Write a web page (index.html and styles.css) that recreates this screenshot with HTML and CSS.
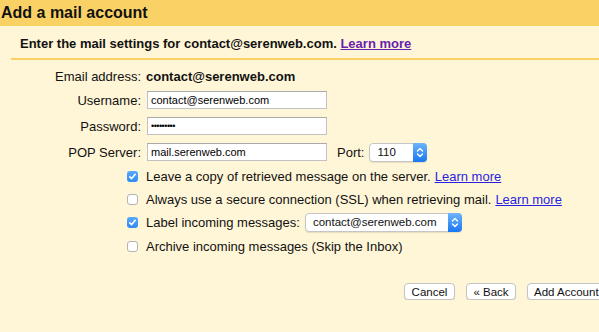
FILE: index.html
```html
<!DOCTYPE html>
<html lang="en">
  <head>
    <meta charset="UTF-8" />
    <meta name="viewport" content="width=device-width, initial-scale=1.0" />
    <title>Add a mail account</title>
    <link rel="stylesheet" href="styles.css">
  </head>
  <body>
    <h1 class="title">Add a mail account</h1>

    <div class="intro">
      Enter the mail settings for contact@serenweb.com.
      <a class="visited" href="#">Learn more</a>
    </div>

    <form class="fields">
      <!--
        Server settings
      -->
      <div class="row row-email">
        <span class="key">Email address:</span>
        <b>contact@serenweb.com</b>
      </div>
      <div class="row">
        <label class="key" for="user">Username:</label>
        <input class="text" id="user" type="text" value="contact@serenweb.com" />
      </div>
      <div class="row">
        <label class="key" for="pass">Password:</label>
        <input class="text pass" id="pass" type="password" value="secret123" />
      </div>
      <div class="row">
        <label class="key" for="pop">POP Server:</label>
        <input class="text" id="pop" type="text" value="mail.serenweb.com" />
        <span class="port-key">Port:</span>
        <div class="select port">
          <span class="value">110</span>
          <span class="arrow">
            <svg width="8" height="11" viewBox="0 0 8 11" fill="none" stroke="#fff" stroke-width="1.4" stroke-linecap="round" stroke-linejoin="round">
              <path d="M1.5 4 L4 1.5 L6.5 4" />
              <path d="M1.5 7 L4 9.5 L6.5 7" />
            </svg>
          </span>
        </div>
      </div>

      <!--
        Options
      -->
      <div class="opt opt-first">
        <span class="box checked">
          <svg width="9" height="9" viewBox="0 0 9 9" fill="none" stroke="#fff" stroke-width="1.6" stroke-linecap="round" stroke-linejoin="round"><path d="M1.8 4.8 L3.7 6.6 L7.2 2.3" /></svg>
        </span>
        Leave a copy of retrieved message on the server.
        <a href="#">Learn more</a>
      </div>
      <div class="opt">
        <span class="box"></span>
        Always use a secure connection (SSL) when retrieving mail.
        <a href="#">Learn more</a>
      </div>
      <div class="opt opt-select">
        <span class="box checked">
          <svg width="9" height="9" viewBox="0 0 9 9" fill="none" stroke="#fff" stroke-width="1.6" stroke-linecap="round" stroke-linejoin="round"><path d="M1.8 4.8 L3.7 6.6 L7.2 2.3" /></svg>
        </span>
        Label incoming messages:
        <div class="select label">
          <span class="value">contact@serenweb.com</span>
          <span class="arrow">
            <svg width="8" height="11" viewBox="0 0 8 11" fill="none" stroke="#fff" stroke-width="1.4" stroke-linecap="round" stroke-linejoin="round">
              <path d="M1.5 4 L4 1.5 L6.5 4" />
              <path d="M1.5 7 L4 9.5 L6.5 7" />
            </svg>
          </span>
        </div>
      </div>
      <div class="opt">
        <span class="box"></span>
        Archive incoming messages (Skip the Inbox)
      </div>

      <div class="btns">
        <button type="button">Cancel</button>
        <button type="button">&laquo; Back</button>
        <button type="submit">Add Account</button>
      </div>
    </form>
  </body>
</html>
```

FILE: styles.css
```css
/*
  Global styles
*/

:root {
  --yellow: #fad165;
  --cream: #fff6d7;
  --link: #2a1fe0;
  --visited: #6a1fb0;
  --border: #c2c2c2;
}
* {
  margin: 0;
  padding: 0;
  box-sizing: border-box;
}
body {
  overflow: hidden;
  color: #111;
  font-size: 13px;
  font-family: "Liberation Sans", Arial, sans-serif;
  background-color: var(--cream);
}
a {
  color: var(--link);
}
a.visited {
  color: var(--visited);
}

/*
  Header
*/

.title {
  height: 26px;
  padding-left: 1px;
  font-size: 16px;
  line-height: 26px;
  background-color: var(--yellow);
}
.intro {
  height: 34px;
  margin-left: 11px;
  padding: 10px 0 0 9px;
  font-weight: bold;
  border-bottom: 2px solid var(--yellow);
}

/*
  Fields
*/

.fields {
  padding-top: 7px;
}
.row {
  display: flex;
  align-items: center;
  height: 18px;
  margin-top: 8px;
  white-space: nowrap;
}
.row-email {
  margin-top: 0;
  margin-bottom: -2px;
}
.row-email b {
  margin-left: -1px;
}
.key {
  flex-shrink: 0;
  width: 141px;
  margin-right: 6px;
  text-align: right;
}
.text {
  width: 180px;
  height: 18px;
  padding: 0 3px;
  font-size: 11px;
  font-family: inherit;
  color: #000;
  outline: none;
  background: #fff;
  border: 1px solid var(--border);
  border-top-color: #a9a9a9;
}
.text.pass {
  font-size: 9px;
  letter-spacing: -0.5px;
}
.port-key {
  margin: 0 5px 0 10px;
}

/*
  Mac style select
*/

.select {
  display: inline-flex;
  align-items: stretch;
  height: 19px;
  font-size: 11.5px;
  background: #fff;
  border: 1px solid #c6c6c6;
  border-radius: 4px;
  box-shadow: 0 1px 1px rgb(0 0 0 / 10%);
}
.select .value {
  flex: 1;
  padding-left: 7px;
  line-height: 17px;
}
.select .arrow {
  display: flex;
  width: 14px;
  margin: -1px -1px -1px 0;
  align-items: center;
  justify-content: center;
  border-radius: 0 4px 4px 0;
  background: linear-gradient(#6db5fb, #1a77f2);
}
.select.port {
  width: 58px;
}
.select.label {
  width: 157px;
  margin-left: 5px;
}

/*
  Options
*/

.opt {
  display: flex;
  align-items: center;
  height: 18px;
  margin: 5px 0 0 127px;
  white-space: nowrap;
}
.opt a {
  margin-left: 4px;
}
.opt-first {
  margin-top: 6px;
}
.opt-select {
  height: 20px;
  margin-top: 4px;
}
.box {
  display: inline-flex;
  flex-shrink: 0;
  width: 11px;
  height: 11px;
  margin-right: 8px;
  align-items: center;
  justify-content: center;
  background: #fff;
  border: 1px solid #b3b3b3;
  border-radius: 3px;
}
.box.checked {
  border: none;
  background: linear-gradient(#5aa9fb, #2f8af5);
}

/*
  Buttons
*/

.btns {
  display: flex;
  gap: 11px;
  margin: 28px 0 0 404px;
  white-space: nowrap;
}
.btns button {
  flex-shrink: 0;
  height: 17px;
  padding: 0 6px;
  font-size: 11.5px;
  font-family: inherit;
  color: #111;
  background: #fff;
  border: 1px solid #c4c4c4;
  border-radius: 4px;
  box-shadow: 0 1px 1px rgb(0 0 0 / 10%);
}
.btns button:nth-child(1) {
  width: 51px;
}
.btns button:nth-child(2) {
  width: 50px;
}
```
